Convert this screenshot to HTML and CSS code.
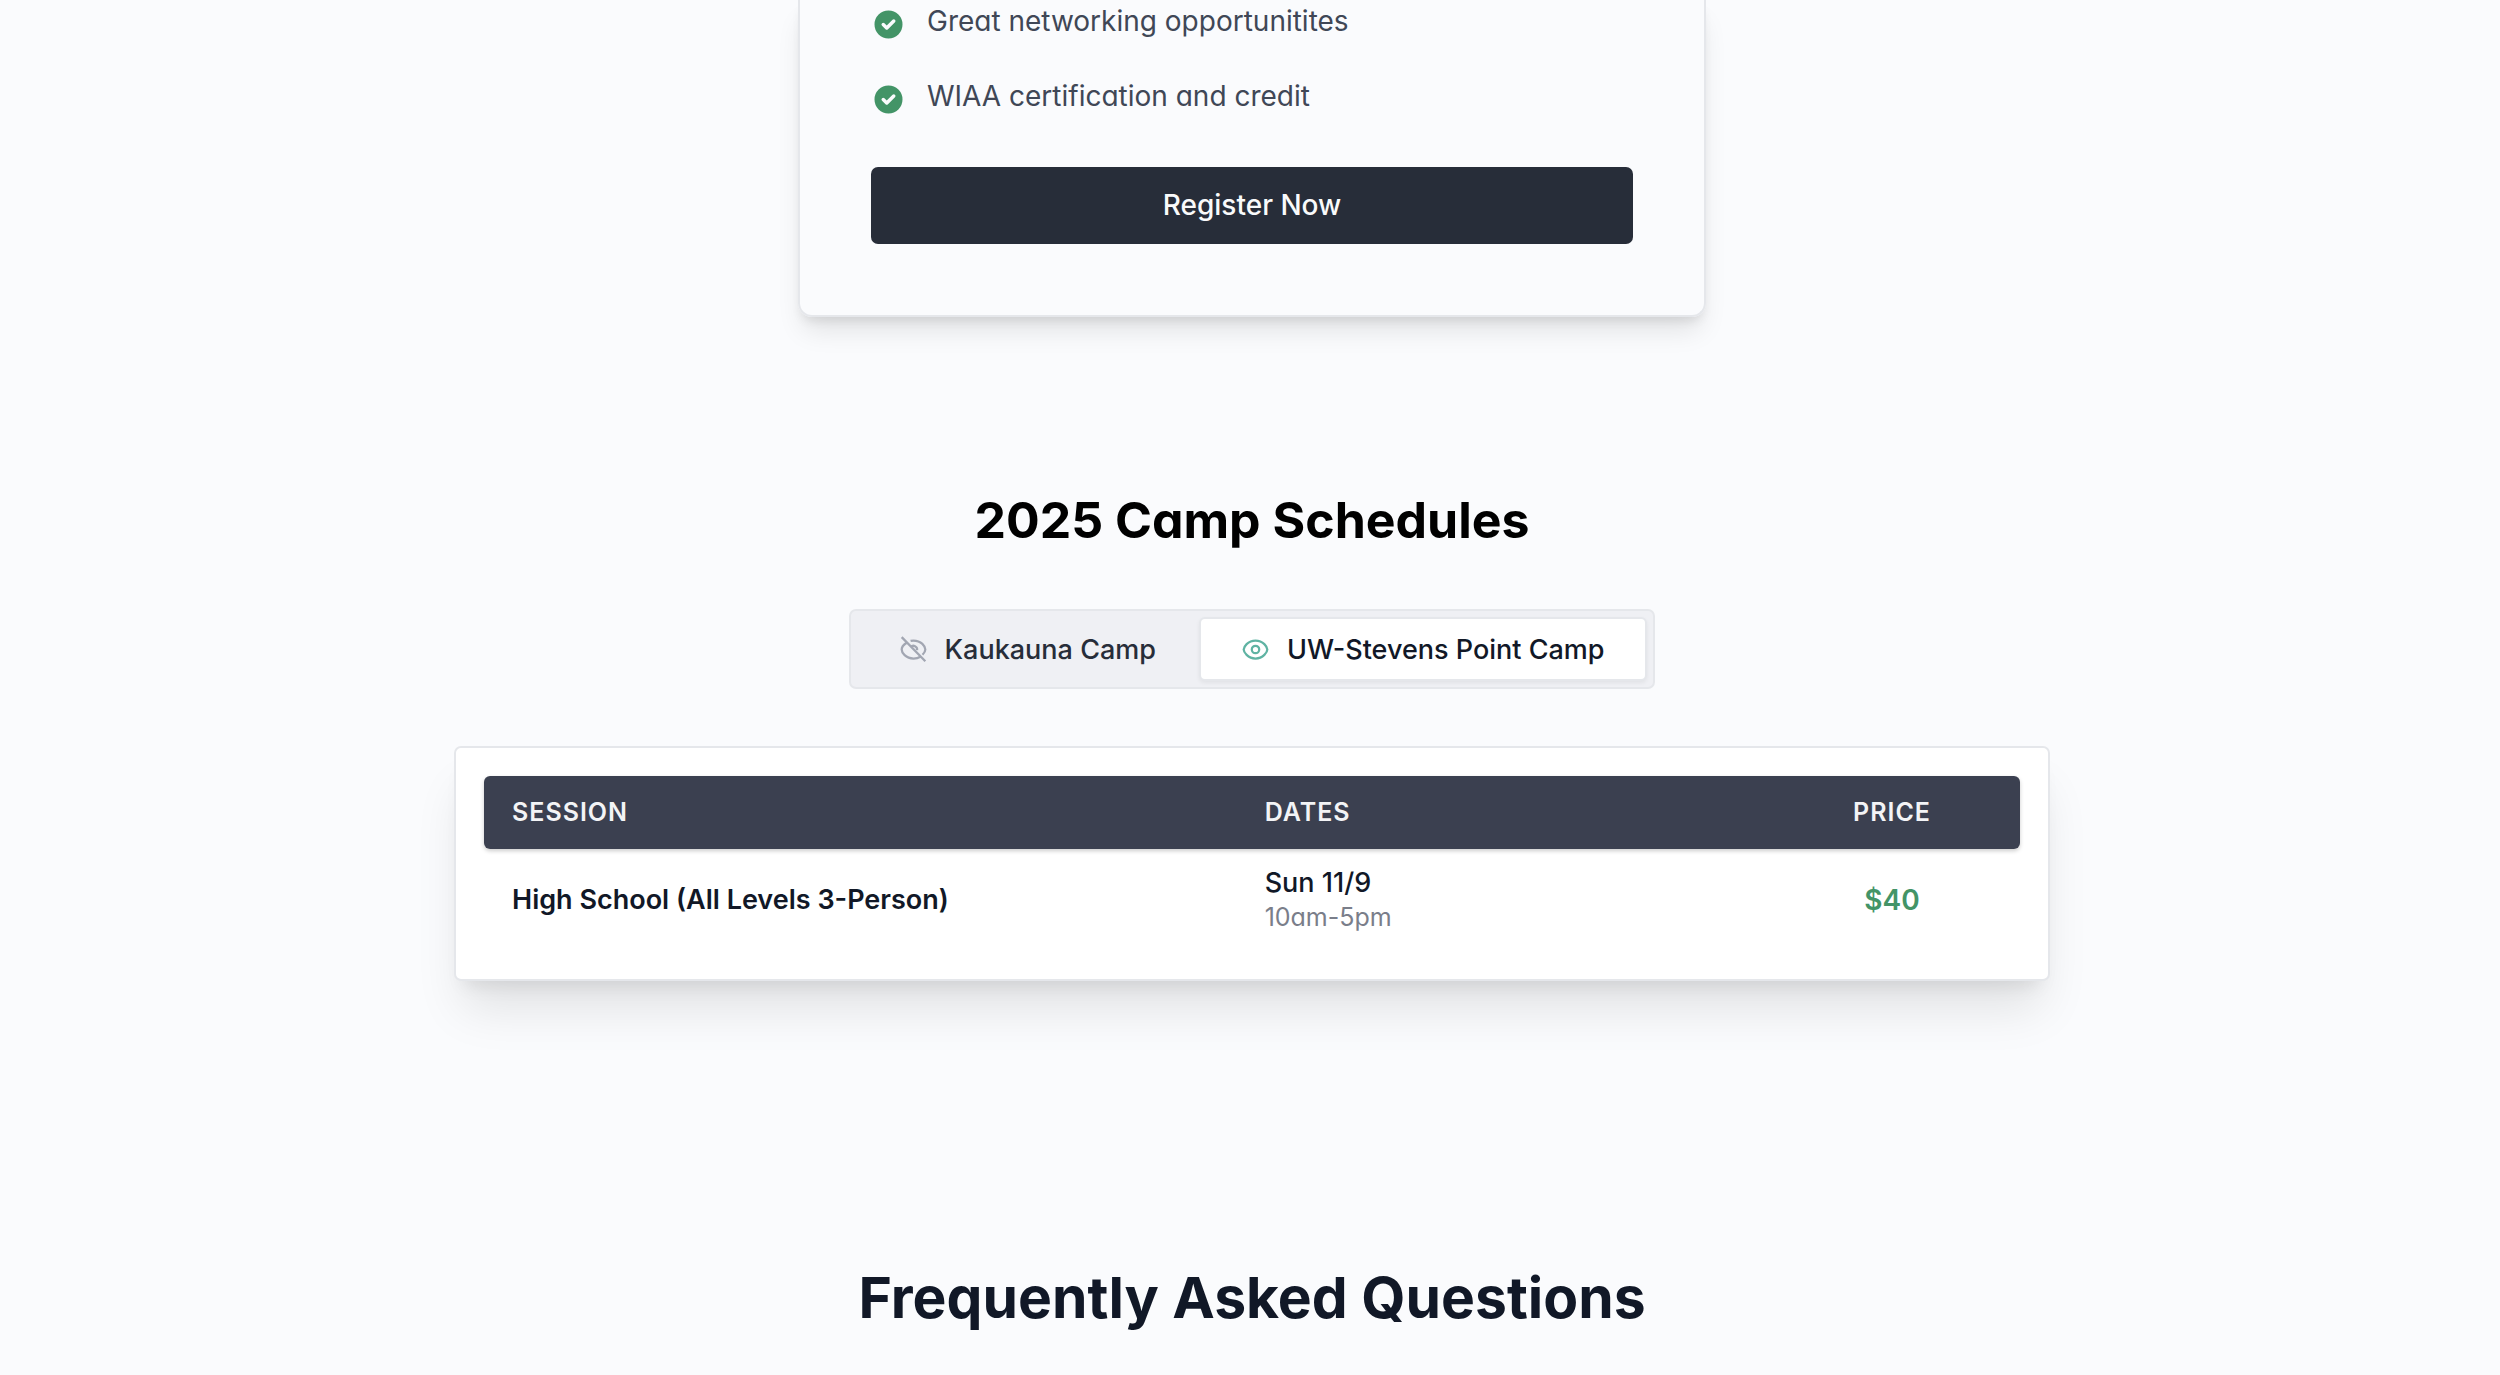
FILE: index.html
```html
<!DOCTYPE html>
<html lang="en">
<head>
<meta charset="utf-8">
<meta name="viewport" content="width=device-width, initial-scale=1">
<title>2025 Camp Schedules</title>
<link rel="stylesheet" href="styles.css">
</head>
<body>
<main class="page">
  <section class="offer">
    <ul class="perks">
      <li class="perk">
        <svg class="perk-icon" viewBox="0 0 20 20" aria-hidden="true"><path fill-rule="evenodd" d="M10 18a8 8 0 100-16 8 8 0 000 16zm3.707-9.293a1 1 0 00-1.414-1.414L9 10.586 7.707 9.293a1 1 0 00-1.414 1.414l2 2a1 1 0 001.414 0l4-4z"/></svg>
        <span>Great networking opportunitites</span>
      </li>
      <li class="perk">
        <svg class="perk-icon" viewBox="0 0 20 20" aria-hidden="true"><path fill-rule="evenodd" d="M10 18a8 8 0 100-16 8 8 0 000 16zm3.707-9.293a1 1 0 00-1.414-1.414L9 10.586 7.707 9.293a1 1 0 00-1.414 1.414l2 2a1 1 0 001.414 0l4-4z"/></svg>
        <span>WIAA certification and credit</span>
      </li>
    </ul>
    <a class="register" href="#register">Register Now</a>
  </section>

  <section class="schedules">
    <h2 class="schedules-title">2025 Camp Schedules</h2>
    <div class="tabs" role="tablist">
      <button class="tab" type="button" role="tab" aria-selected="false">
        <svg class="tab-icon" viewBox="0 0 24 24" aria-hidden="true"><path d="M9.400 4.300C10.200 4.100 11.100 4 12 4c7 0 10.500 5.200 10.500 8 0 1.300-.9 3.100-2.500 4.700M5.500 6.200C2.900 8 1.500 10.300 1.500 12c0 2.800 3.500 8 10.500 8 2.400 0 4.500-.6 6.200-1.600M9.500 9.800A3.300 3.300 0 0 1 15.200 12.500M1.500 1l21 21.500"/></svg>
        <span>Kaukauna Camp</span>
      </button>
      <button class="tab tab-active" type="button" role="tab" aria-selected="true">
        <svg class="tab-icon" viewBox="0 0 24 24" aria-hidden="true"><path d="M1.500 12C1.500 10 5 4 12 4s10.500 6 10.500 8-3.500 8-10.500 8S1.500 14 1.500 12z"/><circle cx="12" cy="12" r="3.300"/></svg>
        <span>UW-Stevens Point Camp</span>
      </button>
    </div>
    <div class="schedule-card">
      <table class="schedule">
        <thead>
          <tr><th class="col-session" scope="col">Session</th><th scope="col">Dates</th><th class="col-price" scope="col">Price</th></tr>
        </thead>
        <tbody>
          <tr>
            <td class="session">High School (All Levels 3-Person)</td>
            <td class="when"><span class="day">Sun 11/9</span><span class="hours">10am-5pm</span></td>
            <td class="price">$40</td>
          </tr>
        </tbody>
      </table>
    </div>
  </section>

  <section class="faq">
    <h2 class="faq-title">Frequently Asked Questions</h2>
  </section>
</main>
</body>
</html>
```
FILE: styles.css
```css
*, *::before, *::after { box-sizing: border-box; }

body {
  margin: 0;
  background: #fafbfd;
  color: #111827;
  font-family: Inter, sans-serif;
  font-size: 28px;
  line-height: 42px;
  font-feature-settings: "cv11";
}

h2 { margin: 0; }

.page {
  display: flex;
  flex-direction: column;
  align-items: center;
  padding-left: 4px;
}

.offer {
  width: 100%;
  max-width: 908px;
  padding: 0 71px 71px;
  border: 2px solid #e5e7eb;
  border-top: 0;
  border-radius: 0 0 14px 14px;
  box-shadow: 0 18px 27px -5px rgba(0, 0, 0, 0.1), 0 7px 11px -4px rgba(0, 0, 0, 0.1);
}

.perks {
  margin: 0;
  padding: 0;
  list-style: none;
  display: flex;
  flex-direction: column;
  gap: 33px;
}

.perk {
  display: flex;
  align-items: flex-start;
  gap: 21px;
  color: #404756;
}

.perk-icon {
  width: 35px;
  height: 35px;
  margin-top: 7px;
  fill: #439467;
}

.register {
  display: block;
  margin-top: 50px;
  border-radius: 7px;
  background: #272d39;
  color: #f9fafb;
  font-weight: 500;
  line-height: 77px;
  text-align: center;
  text-decoration: none;
}

.schedules {
  width: 100%;
  max-width: 1596px;
  padding-top: 171px;
  display: flex;
  flex-direction: column;
  align-items: center;
}

.schedules-title {
  color: #000;
  font-size: 50px;
  font-weight: 700;
  line-height: 64px;
}

.tabs {
  display: flex;
  margin-top: 57px;
  padding: 6px;
  border: 2px solid #e5e7eb;
  border-radius: 7px;
  background: #eff0f4;
}

.tab {
  display: flex;
  align-items: center;
  gap: 18px;
  height: 64px;
  padding: 0 41px;
  border: 2px solid transparent;
  border-radius: 6px;
  background: none;
  color: #272d39;
  font-family: inherit;
  font-size: 27px;
  font-weight: 500;
}

.tab-active {
  border-color: #e5e7eb;
  background: #fff;
  color: #111827;
  box-shadow: 0 2px 4px rgba(0, 0, 0, 0.06);
}

.tab-icon {
  width: 27px;
  height: 27px;
  fill: none;
  stroke: #a2a6b2;
  stroke-width: 2;
}

.tab-active .tab-icon { stroke: #5fb3a3; }

.schedule-card {
  width: 100%;
  margin-top: 57px;
  padding: 28px;
  border: 2px solid #e5e7eb;
  border-radius: 7px;
  background: #fff;
  box-shadow: 0 36px 45px -9px rgba(0, 0, 0, 0.1), 0 14px 18px -11px rgba(0, 0, 0, 0.1);
}

.schedule {
  width: 100%;
  table-layout: fixed;
  border-collapse: separate;
  border-spacing: 0;
}

.schedule thead { border-radius: 6px; box-shadow: 0 2px 4px rgba(0, 0, 0, 0.2); }

.schedule th {
  padding: 0 28px;
  background: #3b4050;
  color: #f3f4f6;
  font-size: 25px;
  font-weight: 600;
  letter-spacing: 1px;
  line-height: 73px;
  text-align: left;
  text-transform: uppercase;
}

.schedule th:first-child { border-radius: 6px 0 0 6px; }
.schedule th:last-child { border-radius: 0 6px 6px 0; }

.schedule .col-session { width: 49%; }
.schedule .col-price { width: 256px; text-align: center; }

.schedule td { padding: 17px 28px; vertical-align: middle; }

.session { font-size: 27px; font-weight: 600; }

.day, .hours { display: block; line-height: 34px; }
.day { font-size: 27px; font-weight: 500; }
.hours { color: #7a7e8a; font-size: 25px; }

.schedule .price {
  color: #439467;
  font-size: 28px;
  font-weight: 600;
  text-align: center;
}

.faq { padding: 281px 0 40px; }

.faq-title {
  font-size: 57px;
  font-weight: 700;
  line-height: 72px;
}
```
